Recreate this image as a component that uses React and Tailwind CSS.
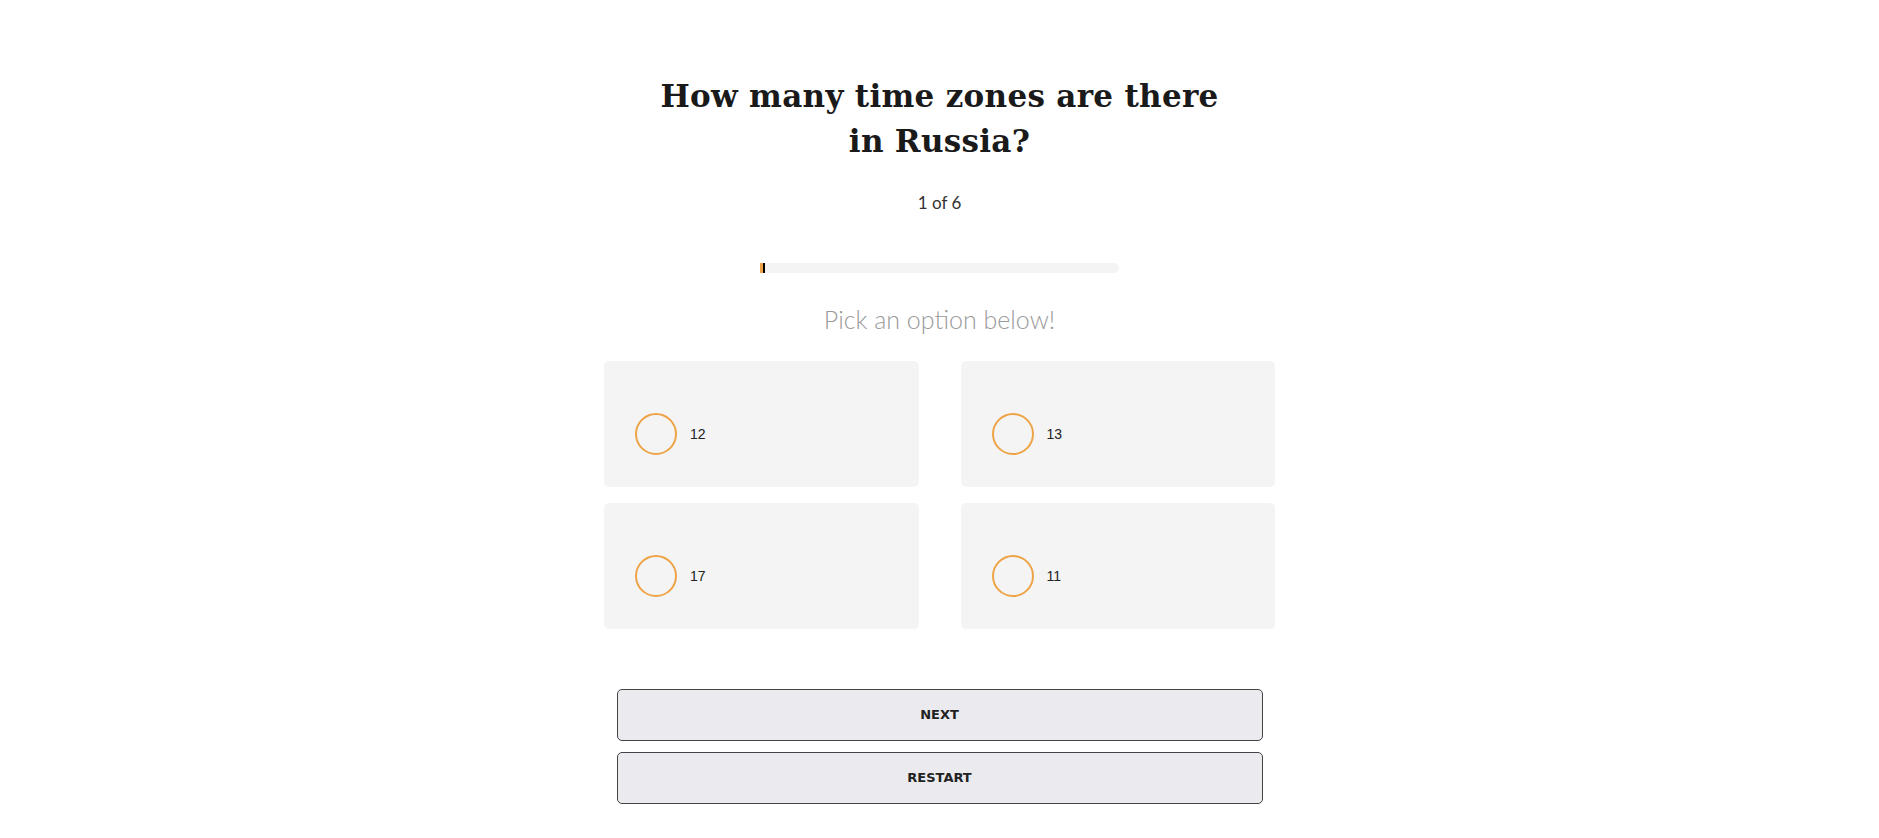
import React, { useState } from 'react';

const question = {
  text: ['How many time zones are there', 'in Russia?'],
  options: ['12', '13', '17', '11'],
};

const Option = ({ label, selected, onSelect }) => (
  <button
    onClick={onSelect}
    className="flex h-[126px] items-center rounded-[5px] bg-[#f4f4f4] pt-[20px] pl-[31px] text-left"
  >
    <span
      className={`h-[42px] w-[42px] shrink-0 rounded-full border-2 border-[#eea446] ${
        selected ? 'bg-[#eea446]' : ''
      }`}
    ></span>
    <span className="ml-[13px] font-['Liberation_Sans',Arial,sans-serif] text-[14px] text-[#222]">
      {label}
    </span>
  </button>
);

const App = () => {
  const [selected, setSelected] = useState(null);

  return (
    <div className="min-h-screen bg-white pt-[74px]">
      <div className="mx-auto flex w-[671px] flex-col items-center">
        {/* Question */}
        <h1 className="text-center font-['DejaVu_Serif',serif] text-[31px] font-bold leading-[45px] tracking-[0.3px] text-[#1a1a1a]">
          {question.text[0]}
          <br />
          {question.text[1]}
        </h1>

        <p className="mt-[26px] font-['Lato',sans-serif] text-[17px] text-[#333]">1 of 6</p>

        {/* Progress */}
        <div className="mt-[47px] flex h-[10px] w-[359px] rounded-full bg-[#f4f4f4]">
          <div className="h-full w-[5px] border-r-2 border-black bg-[#eea446]"></div>
        </div>

        <p className="mt-[28px] font-['Lato',sans-serif] text-[25px] font-light text-[#9a9a9a]">
          Pick an option below!
        </p>

        {/* Options */}
        <div className="mt-[23px] grid w-full grid-cols-2 gap-x-[42px] gap-y-[16px]">
          {question.options.map((opt, i) => (
            <Option key={opt} label={opt} selected={selected === i} onSelect={() => setSelected(i)} />
          ))}
        </div>

        {/* Actions */}
        <div className="mt-[60px] flex w-[646px] flex-col gap-[11px]">
          <button className="h-[52px] w-full rounded-[5px] border border-[#444] bg-[#ebebef] font-['DejaVu_Sans',sans-serif] text-[13px] font-bold text-[#222]">
            NEXT
          </button>
          <button className="h-[52px] w-full rounded-[5px] border border-[#444] bg-[#ebebef] font-['DejaVu_Sans',sans-serif] text-[13px] font-bold text-[#222]">
            RESTART
          </button>
        </div>
      </div>
    </div>
  );
};

export default App;
